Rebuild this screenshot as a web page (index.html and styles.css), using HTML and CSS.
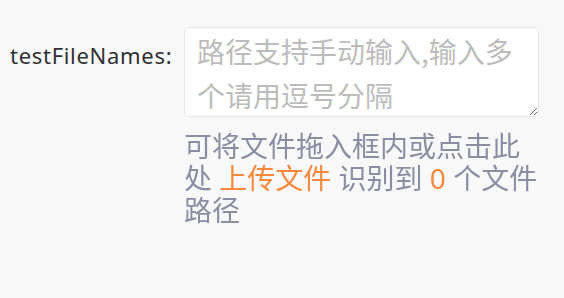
FILE: index.html
```
<!DOCTYPE html>
<html>
<head>
  <title>testFileNames</title>
  <meta name="viewport" content="width=device-width, initial-scale=1.0">
  <link rel="stylesheet" href="styles.css">
</head>
<body>

  <div class="form-item">
    <label class="form-label" for="testFileNames">testFileNames:</label>
    <div class="form-content">
      <textarea id="testFileNames" class="file-input" rows="2" placeholder="路径支持手动输入,输入多个请用逗号分隔"></textarea>
      <div class="help-text">
        可将文件拖入框内或点击此处 <span class="upload-link">上传文件</span> 识别到 <span class="count">0</span> 个文件路径
      </div>
    </div>
  </div>

</body>
</html>
```

FILE: styles.css
```
body {
  margin: 0;
  background-color: #f8f8f8;
  font-family: "Noto Sans", "Noto Sans CJK SC", sans-serif;
}

.form-item {
  display: flex;
  padding-top: 27px;
}

.form-label {
  width: 184px;
  flex-shrink: 0;
  box-sizing: border-box;
  padding-left: 10px;
  padding-top: 14px;
  font-size: 22px;
  line-height: 28px;
  letter-spacing: 0.7px;
  color: #303133;
}

.form-content {
  width: 355px;
}

.file-input {
  display: block;
  width: 100%;
  height: 90px;
  box-sizing: border-box;
  padding: 1px 12px;
  border: 1px solid #e4e7ed;
  border-radius: 6px;
  background-color: #fff;
  font-family: "Noto Sans CJK SC", sans-serif;
  font-size: 28px;
  line-height: 44px;
  color: #606266;
}

.file-input::placeholder {
  color: #bcbcbc;
}

.help-text {
  margin-top: 13px;
  font-family: "Noto Sans", "Noto Sans CJK SC", sans-serif;
  font-size: 28px;
  line-height: 32px;
  color: #8a8ea3;
}

.upload-link,
.count {
  color: #f5883c;
  cursor: pointer;
}
```
